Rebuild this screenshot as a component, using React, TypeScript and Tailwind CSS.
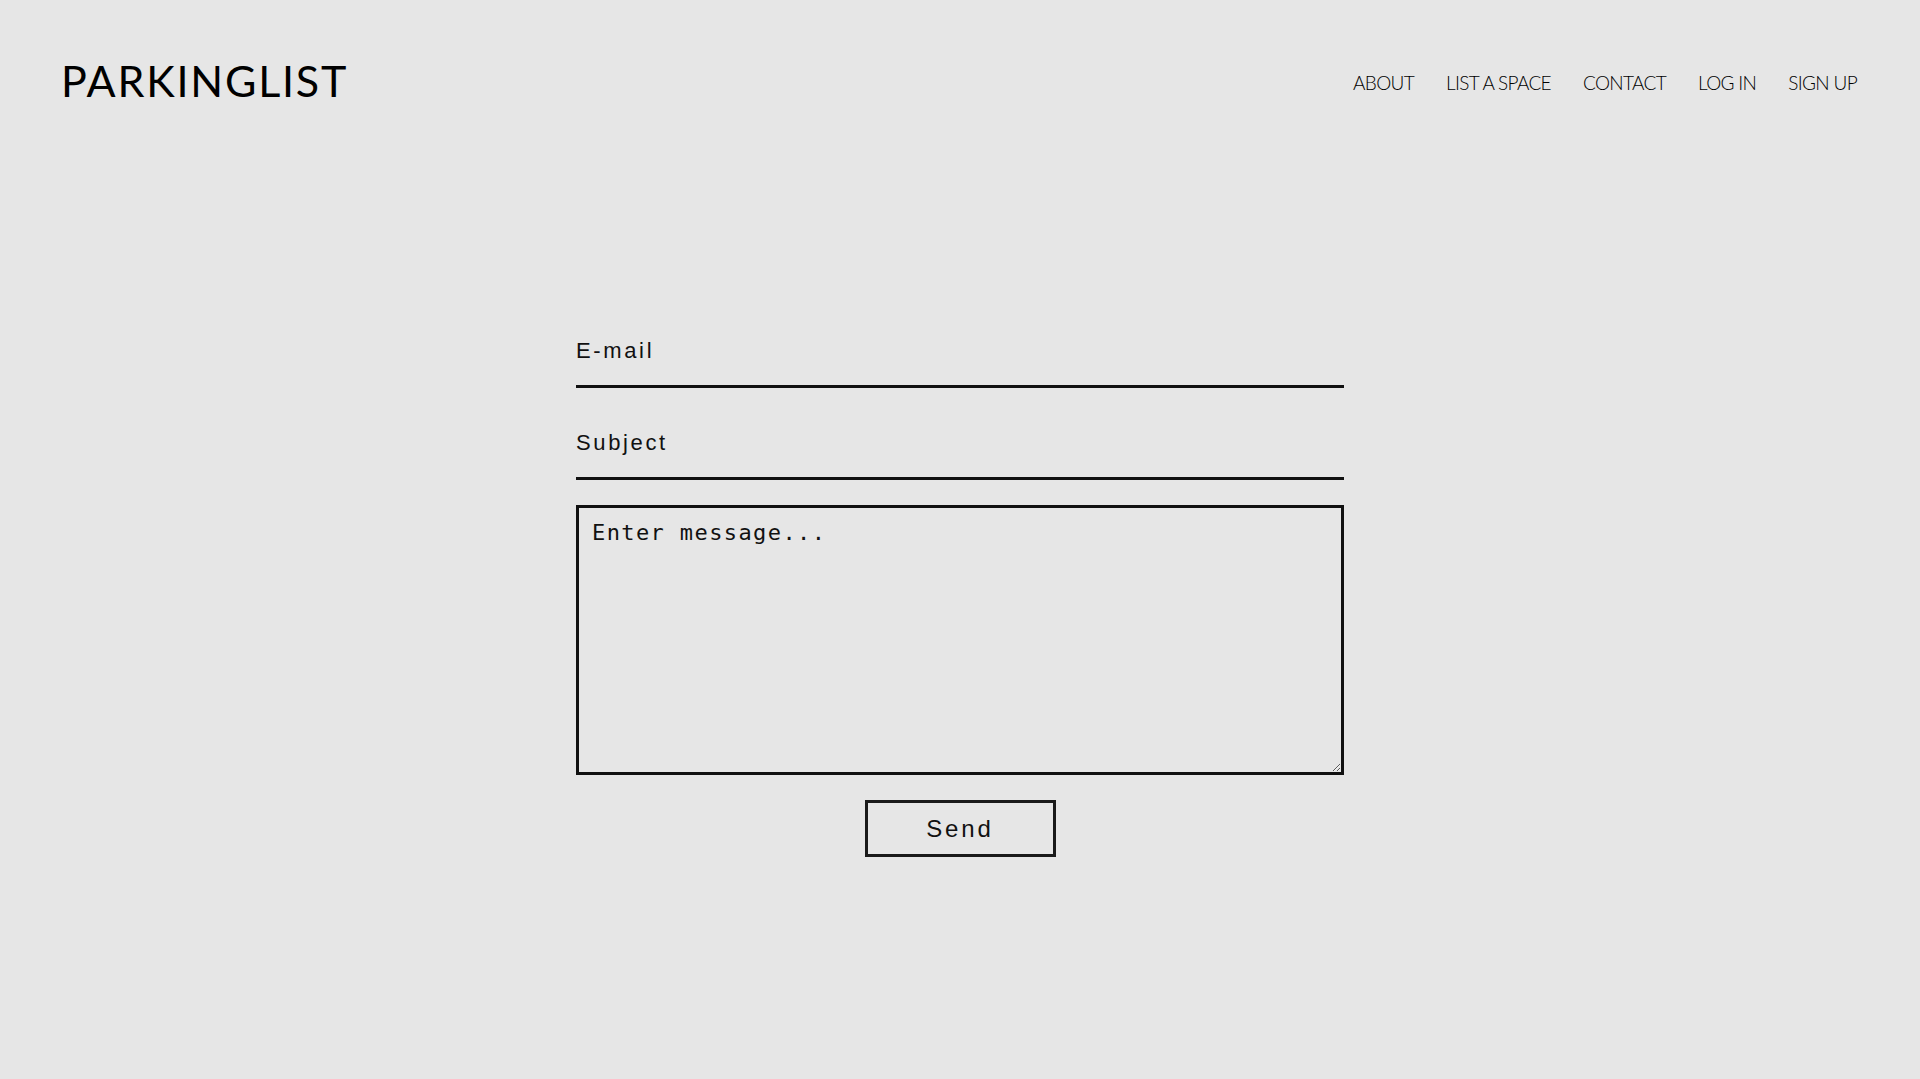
import React from "react";

export default function App() {
  return (
    <div className="min-h-[1079px] w-full bg-[#e6e6e6] text-[#111]">
      <header className="flex h-[160px] items-center justify-between pl-[61px] pr-[63px]">
        <div className="font-['Lato','Noto_Sans',sans-serif] text-[43px] leading-none tracking-[0.042em] text-black">
          PARKINGLIST
        </div>
        <nav className="mt-[4px] flex items-center gap-[32px] font-['Lato','Noto_Sans',sans-serif] text-[19px] font-light leading-none tracking-[-0.035em] text-black">
          <a href="#">ABOUT</a>
          <a href="#">LIST A SPACE</a>
          <a href="#">CONTACT</a>
          <a href="#">LOG IN</a>
          <a href="#">SIGN UP</a>
        </nav>
      </header>
      <main className="flex justify-center pt-[161px]">
        <form className="flex w-[768px] flex-col items-center gap-[25px]">
          <input
            type="email"
            placeholder="E-mail"
            className="box-border h-[67px] w-full border-b-[3px] border-[#111] bg-transparent pb-[5px] font-['Liberation_Sans',Arial,sans-serif] text-[22px] tracking-[0.12em] text-[#111] outline-none placeholder:text-[#111]"
          />
          <input
            type="text"
            placeholder="Subject"
            className="box-border h-[67px] w-full border-b-[3px] border-[#111] bg-transparent pb-[5px] font-['Liberation_Sans',Arial,sans-serif] text-[22px] tracking-[0.12em] text-[#111] outline-none placeholder:text-[#111]"
          />
          <textarea
            placeholder="Enter message..."
            className="box-border h-[270px] w-full border-[3px] border-[#111] bg-transparent px-[13px] py-[12px] font-['DejaVu_Sans_Mono',monospace] text-[22px] leading-[1.2] tracking-[1.4px] text-[#111] outline-none placeholder:text-[#111]"
          />
          <button
            type="button"
            className="box-border h-[57px] w-[191px] border-[3px] border-[#1a1a1a] bg-transparent font-['Liberation_Sans',Arial,sans-serif] text-[24px] tracking-[0.12em] text-[#111]"
          >
            Send
          </button>
        </form>
      </main>
    </div>
  );
}
